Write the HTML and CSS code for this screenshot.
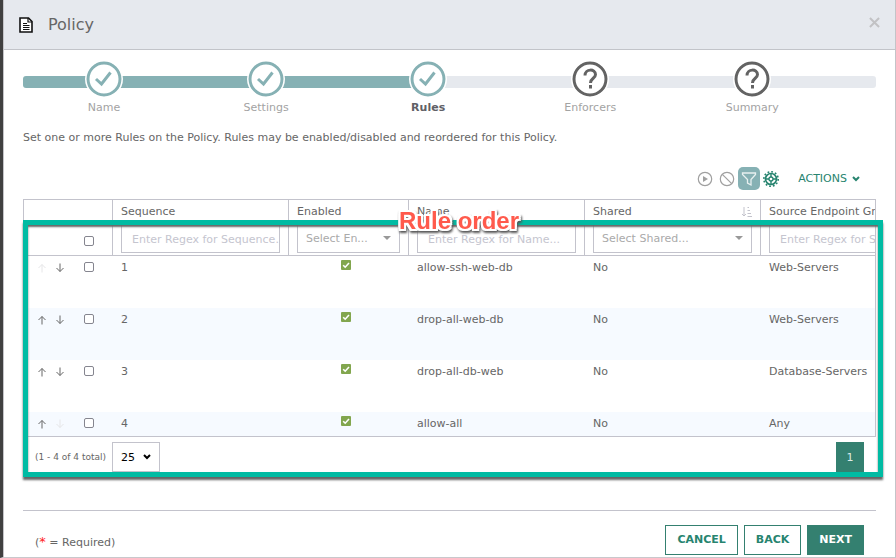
FILE: index.html
```html
<!DOCTYPE html>
<html lang="en">
<head>
<meta charset="utf-8">
<title>Policy</title>
<link rel="stylesheet" href="styles.css">
</head>
<body>
<svg class="defs" aria-hidden="true">
  <symbol id="check" viewBox="0 0 36 36"><circle cx="18" cy="18" r="16" fill="#fff" stroke="currentColor" stroke-width="3"/><path d="M10 18L15.500 23L24.500 11.500" fill="none" stroke="currentColor" stroke-width="3"/></symbol>
  <symbol id="question" viewBox="0 0 36 36"><circle cx="18" cy="18" r="16" fill="#fff" stroke="currentColor" stroke-width="3"/><path d="M13 14.500C13 7.500 23.500 7.500 23.500 13.500C23.500 17.500 18.500 17 18.500 22" fill="none" stroke="currentColor" stroke-width="3"/><path d="M17 24h3v3.500h-3z" fill="currentColor"/></symbol>
  <symbol id="up" viewBox="0 0 10 10"><path d="M5 9.500V1.500M1.500 5L5 1.500L8.500 5" fill="none" stroke="currentColor"/></symbol>
  <symbol id="down" viewBox="0 0 10 10"><path d="M5 .5V8.500M1.500 5L5 8.500L8.500 5" fill="none" stroke="currentColor"/></symbol>
  <symbol id="on" viewBox="0 0 10 10"><rect width="10" height="10" rx="1" fill="#82a64e"/><path d="M2.200 5.200L4.200 7.200L8 3" fill="none" stroke="#fff" stroke-width="1.600"/></symbol>
  <symbol id="chevron" viewBox="0 0 8 6"><path d="M1 1L4 4L7 1" fill="none" stroke="currentColor" stroke-width="2"/></symbol>
</svg>
<main class="dialog">
  <header class="dialog-header">
    <svg class="doc-icon" viewBox="0 0 14 16"><path d="M1 1H9.500L13 4.500V15H1Z" fill="#fff" stroke="#111" stroke-width="1.600"/><path d="M9 1V5H13" fill="none" stroke="#111" stroke-width="1.200"/><path d="M4 6.500H8M4 8.500H10.500M4 10.500H10.500M4 12.500H10.500" stroke="#111"/></svg>
    <h1>Policy</h1>
    <button class="close" aria-label="Close"><svg viewBox="0 0 12 12"><path d="M1 1L11 11M11 1L1 11" stroke="currentColor" stroke-width="2.200"/></svg></button>
  </header>
  <div class="content">
    <nav class="wizard" aria-label="Progress">
      <ol>
        <li class="done"><svg><use href="#check"/></svg><span>Name</span></li>
        <li class="done"><svg><use href="#check"/></svg><span>Settings</span></li>
        <li class="done current"><svg><use href="#check"/></svg><span>Rules</span></li>
        <li><svg><use href="#question"/></svg><span>Enforcers</span></li>
        <li><svg><use href="#question"/></svg><span>Summary</span></li>
      </ol>
    </nav>
    <p class="intro">Set one or more Rules on the Policy. Rules may be enabled/disabled and reordered for this Policy.</p>
    <div class="toolbar">
      <button class="tool" aria-label="Enable"><svg viewBox="0 0 16 16"><circle cx="8" cy="8" r="6.700" fill="none" stroke="currentColor" stroke-width="1.200"/><path d="M6 5L11 8L6 11Z" fill="currentColor"/></svg></button>
      <button class="tool" aria-label="Disable"><svg viewBox="0 0 16 16"><circle cx="8" cy="8" r="6.700" fill="none" stroke="currentColor" stroke-width="1.200"/><path d="M3.300 3.300L12.700 12.700" stroke="currentColor" stroke-width="1.200"/></svg></button>
      <button class="tool active" aria-label="Filter"><svg viewBox="0 0 16 16"><path d="M1.500 2H14.500V3.500L10 8.500V14L6.500 12V8.500L1.500 3.500Z" fill="none" stroke="currentColor" stroke-width="1.300"/></svg></button>
      <button class="tool gear" aria-label="Configure"><svg viewBox="0 0 16 16"><circle cx="8" cy="8" r="7.200" fill="none" stroke="currentColor" stroke-width="1.600" stroke-dasharray="1.800 1.970"/><circle cx="8" cy="8" r="5.500" fill="none" stroke="currentColor" stroke-width="1.700"/><circle cx="8" cy="8" r="2" fill="none" stroke="currentColor" stroke-width="1.300"/><path d="M8 2.500V6M8 10V13.500M2.500 8H6M10 8H13.500" stroke="currentColor" stroke-width="1.400"/></svg></button>
      <button class="actions">ACTIONS <svg><use href="#chevron"/></svg></button>
    </div>
    <section class="rules">
      <div class="grid">
        <table>
          <colgroup><col class="c-tools"><col class="c-wide"><col class="c-narrow"><col class="c-wide"><col class="c-wide"><col class="c-wide"></colgroup>
          <thead>
            <tr class="names"><th></th><th>Sequence</th><th>Enabled</th><th>Name</th><th><div class="sorted">Shared <svg viewBox="0 0 10 10"><path d="M2 0V9M0 7L2 9L4 7M5.500 .5H7M5.500 3.500H8M5.500 6.500H9M5.500 9.500H10" fill="none" stroke="currentColor"/></svg></div></th><th>Source Endpoint Group</th></tr>
            <tr class="filters">
              <th><div class="row-tools"><input type="checkbox" aria-label="Select all"></div></th>
              <th><input type="text" aria-label="Sequence filter" placeholder="Enter Regex for Sequence."></th>
              <th><div class="pick"><select aria-label="Enabled filter"><option>Select En...</option></select></div></th>
              <th><input type="text" aria-label="Name filter" placeholder="Enter Regex for Name..."></th>
              <th><div class="pick"><select aria-label="Shared filter"><option>Select Shared...</option></select></div></th>
              <th><input type="text" aria-label="Source filter" placeholder="Enter Regex for Source..."></th>
            </tr>
          </thead>
          <tbody>
            <tr><td><div class="row-tools"><button disabled aria-label="Move up"><svg><use href="#up"/></svg></button><button aria-label="Move down"><svg><use href="#down"/></svg></button><input type="checkbox" aria-label="Select rule 1"></div></td><td>1</td><td class="on"><svg><use href="#on"/></svg></td><td>allow-ssh-web-db</td><td>No</td><td>Web-Servers</td></tr>
            <tr><td><div class="row-tools"><button aria-label="Move up"><svg><use href="#up"/></svg></button><button aria-label="Move down"><svg><use href="#down"/></svg></button><input type="checkbox" aria-label="Select rule 2"></div></td><td>2</td><td class="on"><svg><use href="#on"/></svg></td><td>drop-all-web-db</td><td>No</td><td>Web-Servers</td></tr>
            <tr><td><div class="row-tools"><button aria-label="Move up"><svg><use href="#up"/></svg></button><button aria-label="Move down"><svg><use href="#down"/></svg></button><input type="checkbox" aria-label="Select rule 3"></div></td><td>3</td><td class="on"><svg><use href="#on"/></svg></td><td>drop-all-db-web</td><td>No</td><td>Database-Servers</td></tr>
            <tr><td><div class="row-tools"><button aria-label="Move up"><svg><use href="#up"/></svg></button><button disabled aria-label="Move down"><svg><use href="#down"/></svg></button><input type="checkbox" aria-label="Select rule 4"></div></td><td>4</td><td class="on"><svg><use href="#on"/></svg></td><td>allow-all</td><td>No</td><td>Any</td></tr>
          </tbody>
        </table>
      </div>
      <div class="pager">
        <span class="total">(1 - 4 of 4 total)</span>
        <div class="size"><select aria-label="Rows per page"><option>25</option></select><svg><use href="#chevron"/></svg></div>
        <button class="page">1</button>
      </div>
      <div class="outline"></div>
      <strong class="callout">Rule order</strong>
    </section>
    <footer class="dialog-footer">
      <span class="required">(<b>*</b> = Required)</span>
      <button>CANCEL</button>
      <button>BACK</button>
      <button class="primary">NEXT</button>
    </footer>
  </div>
</main>
</body>
</html>
```
FILE: styles.css
```css
* { box-sizing: border-box; }
body {
  margin: 0;
  background: #fff;
  color: #666;
  font: 11px/16px "DejaVu Sans", sans-serif;
  overflow: hidden;
}
button, input, select { font: inherit; color: inherit; margin: 0; }
button { padding: 0; border: 0; background: none; }
svg { display: block; flex: none; }
.defs { position: absolute; width: 0; height: 0; }

.dialog {
  border-left: 3px solid #404040;
  border-bottom: 1px solid #c8c8cc;
  box-shadow: inset 1px 0 #c4c4c8, inset -1px 0 #c4c4c8;
  padding: 0 1px 2px;
}
.dialog-header {
  display: flex;
  align-items: center;
  height: 50px;
  padding: 0 15px;
  background: #e6e9ee;
  border-bottom: 1px solid #c2c4c9;
}
.doc-icon { width: 14px; height: 16px; }
h1 { margin: 0 auto 0 15px; font-size: 16px; font-weight: 400; line-height: 20px; }
.close { color: #c2c2c4; padding-bottom: 4px; }
.close svg { width: 11px; height: 11px; }

.content { padding: 11px 19px 0; }
.wizard { position: relative; }
.wizard::before {
  content: "";
  position: absolute;
  z-index: -1;
  inset: 15px 0 auto;
  height: 12px;
  border-radius: 3px;
  background: linear-gradient(90deg, #86b1b4 47%, #e6e9ee 47%);
}
.wizard ol { display: flex; width: 95%; margin: 0; padding: 0; list-style: none; }
.wizard li { flex: 1; display: flex; flex-direction: column; align-items: center; color: #636363; }
.wizard svg { width: 36px; height: 36px; border-radius: 50%; box-shadow: 0 0 0 1px #fff; background: #fff; }
.wizard span { margin-top: 3px; color: #a3a3a3; }
.wizard .done { color: #86b1b4; }
.wizard .current span { color: #606066; font-weight: 700; }
.intro { margin: 14px 0 21px; }

.toolbar { display: flex; align-items: center; justify-content: flex-end; padding-right: 16px; height: 23px; }
.tool { width: 22px; height: 23px; display: grid; place-items: center; color: #a0a0a0; }
.tool svg { width: 16px; height: 16px; }
.tool.active { background: #86b1b4; color: #e8f0f0; border-radius: 5px; }
.tool.gear, .actions { color: #27846f; }
.actions { display: flex; align-items: center; gap: 5px; margin-left: 16px; }
.actions svg { width: 8px; height: 6px; }

.rules { position: relative; margin-top: 9px; }
.grid { height: 238px; overflow: hidden; border: 1px solid #c3c3cc; }
table { width: 912px; table-layout: fixed; border-collapse: separate; border-spacing: 0; }
.c-tools { width: 88px; }
.c-wide { width: 176px; }
.c-narrow { width: 120px; }
th, td { padding: 0 8px; text-align: left; vertical-align: top; font-weight: 400; }
th + th { border-left: 1px solid #c3c3cc; }
td + td { padding-left: 9px; }
.names th { height: 24px; padding-top: 4px; white-space: nowrap; }
.sorted { display: flex; justify-content: space-between; align-items: center; }
.sorted svg { width: 10px; height: 10px; color: #c3c3cc; }
.filters th { height: 32px; border-bottom: 1px solid #c3c3cc; }
.filters input[type=text], .pick select {
  display: block;
  width: 100%;
  height: 29px;
  border: 1px solid #c3c3cc;
  border-radius: 0;
  background: #fff;
}
.filters input[type=text] { padding: 2px 0 0 10px; }
::placeholder { color: #c5c5cf; opacity: 1; }
select { appearance: none; }
.pick { position: relative; }
.pick select { padding: 0 8px; color: #aaa; }
.pick::after {
  content: "";
  position: absolute;
  right: 9px;
  top: 12px;
  border: 4px solid transparent;
  border-top-color: #999;
  border-bottom: 0;
}
tbody td { height: 52px; padding-top: 4px; }
tbody td:first-child { padding-top: 3px; }
tbody tr:nth-child(even) { background: #f6faff; }
.row-tools { display: flex; align-items: center; justify-content: flex-end; gap: 8px; height: 16px; padding-right: 10px; }
.filters .row-tools { margin-top: 9px; }
.row-tools button { width: 10px; height: 10px; margin-top: 2px; }
.row-tools svg { width: 10px; height: 10px; }
.row-tools button + input { margin-left: 11px; }
.row-tools button:disabled { color: #e6e6e8; }
input[type=checkbox] { appearance: none; width: 10px; height: 10px; border: 1px solid #85858f; border-radius: 2px; background: #fff; }
td.on { padding-right: 14px; }
.on svg { width: 10px; height: 10px; margin: 0 auto; }

.pager { display: flex; align-items: center; padding: 5px 12px 0; }
.total { width: 77px; font-size: 9px; white-space: nowrap; }
.size { position: relative; color: #000; }
.size select { width: 48px; height: 30px; padding: 1px 8px 0; border: 1px solid #c3c3cc; border-radius: 0; background: #fff; }
.size svg { position: absolute; right: 9px; top: 12px; width: 8px; height: 6px; }
.page { width: 28px; height: 30px; padding-top: 1px; margin-left: auto; background: #348070; color: #dcebe7; }

.outline {
  position: absolute;
  inset: 21px -7px -5px 0;
  border: 5px solid #00bba3;
  box-shadow: 0 3px 2px #666, inset 0 2px 2px #666;
  pointer-events: none;
}
.callout {
  position: absolute;
  left: 376px;
  top: 8px;
  color: #ff5a4c;
  font: 700 24px/28px "Liberation Sans", sans-serif;
  -webkit-text-stroke: 1px #ff5a4c;
  paint-order: stroke fill;
  text-shadow: 2px 0 #fff, -2px 0 #fff, 0 2px #fff, 0 -2px #fff, 2px 2px #fff, -2px 2px #fff, 2px -2px #fff, -2px -2px #fff;
  filter: drop-shadow(1px 2px 1px #555);
}

.dialog-footer {
  display: flex;
  gap: 6px;
  margin-top: 38px;
  padding: 14px 12px 0;
  border-top: 1px solid #c3c3cc;
}
.required { margin: 10px auto 0 0; }
.required b { color: #f22; font-size: 13px; font-weight: 400; line-height: 12px; }
.dialog-footer button { height: 30px; padding: 0 11px 1px; border: 1px solid #348070; color: #27846f; font-weight: 700; }
.dialog-footer .primary { background: #348070; color: #fff; }
```
